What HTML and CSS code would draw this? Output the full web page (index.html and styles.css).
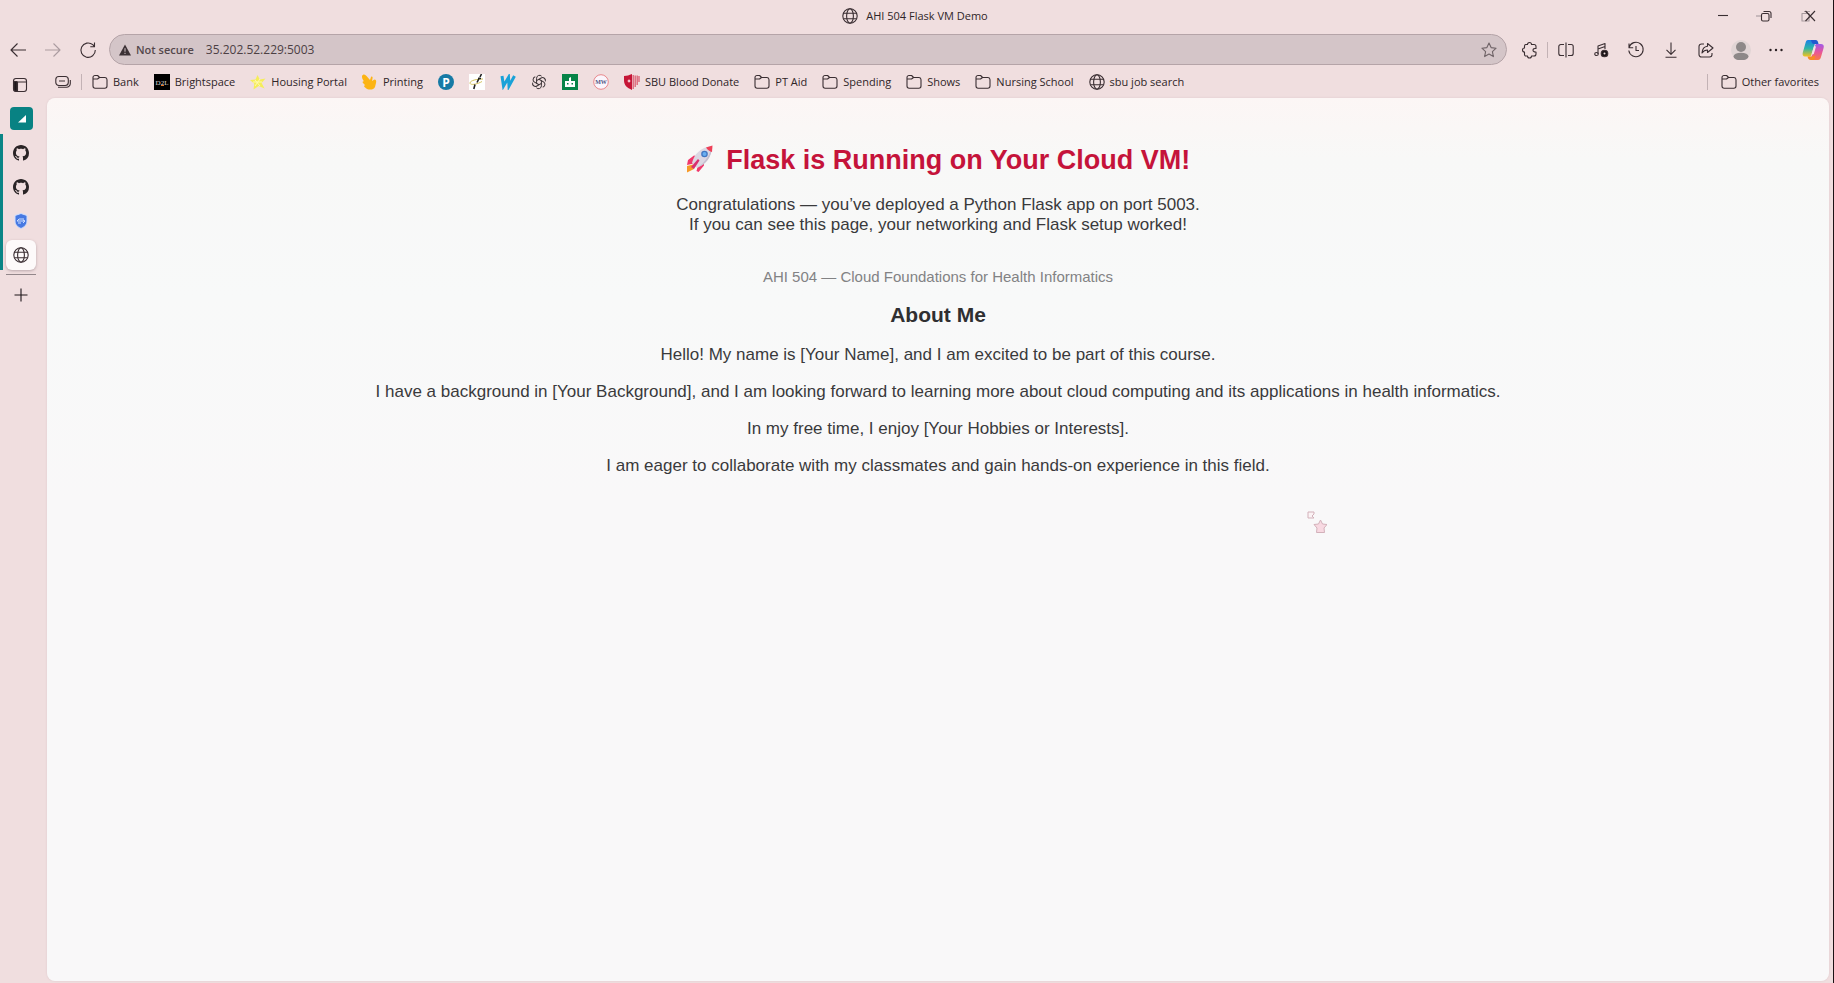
FILE: index.html
```html
<!DOCTYPE html>
<html lang="en">
<head>
<meta charset="utf-8">
<title>AHI 504 Flask VM Demo</title>
<link rel="stylesheet" href="styles.css">
</head>
<body>
<svg class="defs" aria-hidden="true">
  <symbol id="folder" viewBox="0 0 16 16"><path d="M1 4V3.500a2 2 0 0 1 2-2h2.600l2 2H13A2.200 2.200 0 0 1 15 5.700V12a2.200 2.200 0 0 1-2.200 2.200H3.200A2.200 2.200 0 0 1 1 12ZM1 5h4.500l2-1.500"/></symbol>
  <symbol id="globe" viewBox="0 0 16 16"><circle cx="8" cy="8" r="7.200"/><ellipse cx="8" cy="8" rx="3.400" ry="7.200"/><path d="M1.500 5.300h13M1.500 10.700h13"/></symbol>
  <symbol id="github" viewBox="0 0 16 16"><path d="M8 0C3.580 0 0 3.580 0 8c0 3.540 2.290 6.530 5.470 7.590.4.070.55-.17.55-.38 0-.19-.01-.82-.01-1.490-2.010.37-2.530-.49-2.690-.94-.09-.23-.48-.94-.82-1.130-.28-.15-.68-.52-.01-.53.63-.01 1.080.58 1.230.82.72 1.210 1.870.87 2.330.66.07-.52.28-.87.51-1.070-1.780-.2-3.640-.89-3.640-3.950 0-.87.31-1.590.82-2.150-.08-.2-.36-1.020.08-2.120 0 0 .67-.21 2.200.82.64-.18 1.320-.27 2-.27s1.360.09 2 .27c1.530-1.040 2.200-.82 2.200-.82.44 1.100.16 1.920.08 2.120.51.56.82 1.270.82 2.150 0 3.070-1.870 3.750-3.650 3.950.29.25.54.73.54 1.480 0 1.070-.01 1.930-.01 2.200 0 .21.15.46.55.38A8 8 0 0 0 16 8c0-4.420-3.580-8-8-8Z"/></symbol>
</svg>

<header class="titlebar">
  <div class="title"><svg class="icon"><use href="#globe"/></svg><span>AHI 504 Flask VM Demo</span></div>
  <div class="window-controls">
    <button class="window-button" aria-label="Minimize"><svg class="icon" viewBox="0 0 16 16"><path d="M3 7.500h10"/></svg></button>
    <button class="window-button" aria-label="Restore"><svg class="icon" viewBox="0 0 16 16"><path class="faint" d="M-2 8h6"/><rect x="3.500" y="5.500" width="7.500" height="7.500" rx="1.500"/><path d="M5.500 3.500h5.500a2 2 0 0 1 2 2V10"/></svg></button>
    <button class="window-button" aria-label="Close"><svg class="icon" viewBox="0 0 16 16"><path class="faint" d="M1 5.500h7V13H1ZM3 3.500h6"/><path d="m4.500 3 9.500 10M14 3 4.500 13"/></svg></button>
  </div>
</header>

<nav class="toolbar" aria-label="Navigation">
  <button class="tool" aria-label="Back"><svg class="icon" viewBox="0 0 16 16"><path d="M7.500 1.500 1 8l6.500 6.500M1 8h15"/></svg></button>
  <button class="tool tool-off" aria-label="Forward"><svg class="icon" viewBox="0 0 16 16"><path d="M8.500 1.500 15 8l-6.500 6.500M15 8H0"/></svg></button>
  <button class="tool" aria-label="Refresh"><svg class="icon" viewBox="0 0 16 16"><path d="M15.300 8A7.200 7.200 0 1 1 12.800 2.700L14.500 4.500M14.500.500v4.200h-4.200"/></svg></button>
  <div class="address">
    <button class="security"><svg class="warning" viewBox="0 0 12 12"><path d="M6 .500 12 11.500H0Z"/><path class="mark" d="M6 4.200v3.500M6 8.800v1.200"/></svg>Not secure</button>
    <input class="url" type="text" aria-label="Address" value="35.202.52.229:5003">
    <button class="favorite" aria-label="Add to favorites"><svg class="icon" viewBox="0 0 16 16"><path d="m8 1 2.100 4.600 5 .6-3.700 3.400 1 5L8 12.100l-4.400 2.500 1-5L.900 6.200l5-.6Z"/></svg></button>
  </div>
  <button class="tool" aria-label="Extensions"><svg class="icon" viewBox="0 0 16 16"><path d="M5.500 2.500a2 2 0 0 1 4 0h2.500a2 2 0 0 1 2 2v2c-4-.7-4 4 0 3.500v2a2 2 0 0 1-2 2H9.500a2 2 0 0 1-4 0H4A1.500 1.500 0 0 1 2.500 12.500V10a2 2 0 0 1 0-4V4A1.500 1.500 0 0 1 4 2.500Z"/></svg></button>
  <span class="divider"></span>
  <button class="tool" aria-label="Split screen"><svg class="icon" viewBox="0 0 16 16"><path d="M8 .500v15M6 2.500H2.800a2 2 0 0 0-2 2v7a2 2 0 0 0 2 2H6M10 2.500h3.200a2 2 0 0 1 2 2v7a2 2 0 0 1-2 2H10"/></svg></button>
  <button class="tool" aria-label="Media control"><svg class="icon" viewBox="0 0 16 16"><path d="M5 12V4l7-2.500V7M5 7l7-2.500"/><ellipse cx="3.500" cy="12" rx="1.800" ry="1.500"/><circle class="solid" cx="11.500" cy="11.500" r="3.300"/><circle class="dot" cx="11.500" cy="11.500" r="1"/></svg></button>
  <button class="tool" aria-label="History"><svg class="icon" viewBox="0 0 16 16"><path d="M1 5.500A7.200 7.200 0 1 1 .800 8.500M1 1.500v4.200h4.200M8 4v4.500h3"/></svg></button>
  <button class="tool" aria-label="Downloads"><svg class="icon" viewBox="0 0 16 16"><path d="M8 .500v11.500M3.500 7.800 8 12.300l4.500-4.500M2.500 15.300h11"/></svg></button>
  <button class="tool" aria-label="Share"><svg class="icon" viewBox="0 0 16 16"><path d="M6 2H3.500A2.500 2.500 0 0 0 1 4.500v8A2.500 2.500 0 0 0 3.500 15h8a2.500 2.500 0 0 0 2.500-2.500V11M9.500 1.500 15 6l-5.500 4.500V8C7 8 5.500 8.800 4 11c.3-4 2.500-6.500 5.500-6.800Z"/></svg></button>
  <button class="tool" aria-label="Profile"><svg class="avatar" viewBox="0 0 20 20"><circle class="avatar-back" cx="10" cy="10" r="10"/><circle cx="10" cy="7" r="5"/><ellipse cx="10" cy="16.500" rx="7.500" ry="3.800"/></svg></button>
  <button class="tool" aria-label="Settings and more"><svg class="icon dots" viewBox="0 0 16 16"><circle cx="2.500" cy="8" r="1.200"/><circle cx="8" cy="8" r="1.200"/><circle cx="13.500" cy="8" r="1.200"/></svg></button>
  <button class="tool copilot" aria-label="Copilot"><svg class="copilot-icon" viewBox="0 0 22 22">
    <defs><linearGradient id="cool" x1="0" y1="0" x2="0" y2="1"><stop offset="0" stop-color="#1b7fe8"/><stop offset=".5" stop-color="#2db5a8"/><stop offset="1" stop-color="#f5c21b"/></linearGradient><linearGradient id="warm" x1="0" y1="0" x2="0" y2="1"><stop offset="0" stop-color="#a05be8"/><stop offset=".5" stop-color="#e7559c"/><stop offset="1" stop-color="#fb7a45"/></linearGradient></defs>
    <path fill="url(#cool)" d="M6 1h8L9.500 15.500C9 17 8.500 17.500 7 17.500H3C.8 17.500.200 15.800.800 13.500L3.500 4C4 2 4.500 1 6 1Z"/>
    <path fill="#2259ce" d="M9 1h4.500c2 0 2.500 1.500 3 4H12C10 5 9.600 3 9 1Z"/>
    <path fill="url(#warm)" d="M14.500 5H19c2.400 0 3.200 1.600 2.600 4L19 18c-.6 2-1.300 3-3 3H8.500L13 7c.4-1.400.7-2 1.500-2Z"/>
    <path fill="#f68a24" d="M5.500 17.500h4.700l3.300-1L12 21h-3c-2.500 0-2.800-1.500-3.500-3.500Z"/>
    <path fill="#f3e2e6" d="m12 7-2.500 8.500H10l1.800-.5L14 7.500Z"/></svg></button>
</nav>

<div class="workspace">
  <aside class="sidebar">
    <button class="side-button" aria-label="Tab actions"><svg class="icon" viewBox="0 0 16 16"><rect x="1.500" y="1.500" width="13" height="13" rx="2.500"/><path d="M2 5h12.500M5.500 5v9"/><path class="solid" d="M2 4.500h3v9.500H3L2 13Z"/></svg></button>
    <button class="group" aria-label="Tab group"><svg class="group-icon" viewBox="0 0 8 8"><path d="M8 0v7.500H0Z"/></svg></button>
    <div class="tabs">
      <button class="tab" aria-label="GitHub"><svg class="mark-icon"><use href="#github"/></svg></button>
      <button class="tab" aria-label="GitHub"><svg class="mark-icon"><use href="#github"/></svg></button>
      <button class="tab" aria-label="Cloud security"><svg class="shield" viewBox="0 0 14 16"><path fill="#4779e2" d="m7 .500 6 2V8c0 3.500-2.500 6-6 7.500C3.500 14 1 11.500 1 8V2.500Z"/><path d="M3 8h8M5 6h5M4 10h3M9 7l2 1-2 2M5 6 3 8"/></svg></button>
      <button class="tab tab-current" aria-label="AHI 504 Flask VM Demo"><svg class="icon"><use href="#globe"/></svg></button>
    </div>
    <button class="new-tab" aria-label="New tab"><svg class="icon" viewBox="0 0 16 16"><path d="M8 1.500v13M1.500 8h13"/></svg></button>
  </aside>

  <div class="main">
    <nav class="bookmarks" aria-label="Favorites">
      <button class="bookmark" aria-label="Saved tabs"><svg class="icon" viewBox="0 0 16 16"><rect x=".8" y="2.500" width="12.500" height="9" rx="3"/><path d="M4 7h6M3 13.300h8.500A3.800 3.800 0 0 0 15.300 9.500V6"/></svg></button>
      <span class="divider"></span>
      <a class="bookmark" href="#"><svg class="icon"><use href="#folder"/></svg>Bank</a>
      <a class="bookmark" href="#"><svg class="picture" viewBox="0 0 16 16"><path d="M0 0h16v16H0Z"/><text x="8" y="11" class="d2l">D2L</text><path fill="#e87424" d="M7 11h3v1H7Z"/></svg>Brightspace</a>
      <a class="bookmark" href="#"><svg class="picture" viewBox="0 0 16 16"><path fill="#f5ed5a" d="m7.500 1 2.300 4.400 5.700-.9-3.900 4.400 3 5.600-6-2.500-5.100 3.600.8-5.800L0 6l5.500-.5Z"/><path fill="none" stroke="#fff9b0" d="m5 6 5 6M10 5l-5 7M3 8h9"/></svg>Housing Portal</a>
      <a class="bookmark" href="#"><svg class="picture" viewBox="0 0 16 16"><path fill="#fcb414" d="M0 2C1 0 3 0 4.500 2L8 6 9 3C10 2 11 3 10.500 4.500L10 7 12.500 5.500C14 5.500 14.500 7 14 9L13 13C11.500 16 8 16 5 15L2.500 13C1.500 12 2.500 11 3.500 11.500L1 9C0 8 1 7 2 7.500L.5 5C0 3.500 0 3 0 2Z"/></svg>Printing</a>
      <a class="bookmark" href="#" aria-label="Pearson"><svg class="picture" viewBox="0 0 16 16"><circle cx="8" cy="8" r="8" fill="#167aa5"/><text x="8" y="12.500" class="pearson">P</text></svg></a>
      <a class="bookmark" href="#" aria-label="Dance"><svg class="picture" viewBox="0 0 16 16"><path fill="#fff" d="M0 0h16v16H0Z"/><path fill="none" stroke="#d3c05a" d="M14 5C8 5 1 6.500 1 9s7 1.500 12-1.500"/><path fill="none" stroke="#222" stroke-width="1.600" d="m12.500 0-1.500 3M10.500 3.500 8 8.500M6 10.500 4.800 15M9 4.500h3"/></svg></a>
      <a class="bookmark" href="#" aria-label="W"><svg class="picture" viewBox="0 0 16 16"><path fill="none" stroke="#19a2d8" stroke-width="3" d="M2 2l1.500 10L8.500 3.500l.5 8.500L14.500 2"/></svg></a>
      <a class="bookmark" href="#" aria-label="ChatGPT"><svg class="picture knot" viewBox="0 0 16 16"><g id="petal"><path d="M5.600 9.400V4.200A2.900 2.900 0 0 1 10.600 2.200"/></g><use href="#petal" transform="rotate(60 8 8)"/><use href="#petal" transform="rotate(120 8 8)"/><use href="#petal" transform="rotate(180 8 8)"/><use href="#petal" transform="rotate(240 8 8)"/><use href="#petal" transform="rotate(300 8 8)"/></svg></a>
      <a class="bookmark" href="#" aria-label="Robot"><svg class="picture" viewBox="0 0 16 16"><path fill="#078448" d="M0 0h16v16H0Z"/><path fill="#fff" d="M3 7h4V4L9 3v4h4v6H3Z"/><path fill="#078448" d="M5 9h1.500v1.500H5ZM9.500 9H11v1.500H9.500Z"/></svg></a>
      <a class="bookmark" href="#" aria-label="MW"><svg class="picture" viewBox="0 0 16 16"><circle cx="8" cy="8" r="7.300" fill="#faf5fc" stroke="#e9878b"/><text x="8" y="10" class="mw">MW</text></svg></a>
      <a class="bookmark" href="#"><svg class="picture" viewBox="0 0 16 16"><path fill="#c51637" d="M0 2c3 0 5-1 8-2v16C3 13.500 0 11.500 0 6Z"/><path fill="#fff" d="m5 5 .7 1.500L7 7l-1.300.6L5 9l-.6-1.400L3 7l1.400-.5Z"/><path fill="none" stroke="#dd6678" stroke-width="1.400" d="M9.200 1v14M11.200 1.500v11.500M13.200 1.500V11M15 2v6"/></svg>SBU Blood Donate</a>
      <a class="bookmark" href="#"><svg class="icon"><use href="#folder"/></svg>PT Aid</a>
      <a class="bookmark" href="#"><svg class="icon"><use href="#folder"/></svg>Spending</a>
      <a class="bookmark" href="#"><svg class="icon"><use href="#folder"/></svg>Shows</a>
      <a class="bookmark" href="#"><svg class="icon"><use href="#folder"/></svg>Nursing School</a>
      <a class="bookmark" href="#"><svg class="icon"><use href="#globe"/></svg>sbu job search</a>
      <span class="divider divider-end"></span>
      <a class="bookmark" href="#"><svg class="icon"><use href="#folder"/></svg>Other favorites</a>
    </nav>

    <main class="page">
      <h1><svg class="rocket" viewBox="0 0 28 28" aria-hidden="true"><path fill="#f79a28" d="M1 21 7 19.500 8 24 1 27.500Z"/><path fill="#f0386b" d="m2 15 6-4.500 4 1-4 7-7 1.500ZM12 20l6-5v5.500L12.500 27 10.500 26Z"/><path fill="#dcd7e3" d="M6 18C8 10 14 2 26 1c0 11-6 18-15 22Z"/><path fill="#c5bfce" d="M11 23C20 17 24 9 26 1c0 11-6 18-15 22Z"/><path fill="#ef4058" d="M20 2.500 26.500.500 26 7C24 6.500 21.500 5 20 2.500Z"/><circle cx="18.500" cy="9" r="3.300" fill="#4176c2"/><circle cx="18.500" cy="9" r="2" fill="#69aef0"/><path fill="#d92e6f" d="m12 14 1.500 1.500L8 24l-3-2Z"/></svg> Flask is Running on Your Cloud VM!</h1>
      <p>Congratulations — you’ve deployed a Python Flask app on port 5003.<br>If you can see this page, your networking and Flask setup worked!</p>
      <p class="course">AHI 504 — Cloud Foundations for Health Informatics</p>
      <h2>About Me</h2>
      <p>Hello! My name is [Your Name], and I am excited to be part of this course.</p>
      <p>I have a background in [Your Background], and I am looking forward to learning more about cloud computing and its applications in health informatics.</p>
      <p>In my free time, I enjoy [Your Hobbies or Interests].</p>
      <p>I am eager to collaborate with my classmates and gain hands-on experience in this field.</p>
      <svg class="pointer" viewBox="0 0 20 22" aria-hidden="true"><path d="M1 1h6v2L5 5l2 2H1Z"/><path class="pointer-star" d="m13.500 9 2 4 4.500.5-3 3.500.5 4.500h-8l.5-4.500-3-3.500 4.500-.5Z"/></svg>
    </main>
  </div>
</div>
</body>
</html>
```

FILE: styles.css
```css
* { box-sizing: border-box; }

body {
  margin: 0;
  min-height: 100vh;
  display: flex;
  flex-direction: column;
  background: #f0dedf;
  border-right: 1px solid #1c1215;
  color: #2f2528;
  font: 11px/16px "Open Sans", "Noto Sans", sans-serif;
}

button {
  padding: 0;
  border: 0;
  background: none;
  color: inherit;
  font: inherit;
}

button, .bookmark { display: flex; align-items: center; justify-content: center; }

.defs { position: absolute; width: 0; height: 0; }

.icon {
  flex: none;
  width: 16px;
  height: 16px;
  overflow: visible;
  fill: none;
  stroke: #3a2e32;
  stroke-width: 1.1;
  stroke-linejoin: round;
}
.icon .solid { fill: #1c1518; }
.icon .dot { fill: #f0dedf; stroke: none; }
.icon .faint { stroke: #a79a9d; }

.titlebar {
  display: grid;
  grid-template-columns: 1fr auto 1fr;
  align-items: center;
  height: 34px;
  padding: 0 3px 3px 0;
}
.title { grid-column: 2; display: flex; align-items: center; gap: 8px; }
.window-controls { display: flex; justify-content: flex-end; }
.window-button { width: 43px; height: 30px; }

.toolbar { display: flex; align-items: center; height: 31px; }
.tool { flex: none; width: 35px; height: 30px; }
.tool-off .icon { stroke: #ab9ca0; }
.divider { flex: none; width: 1px; height: 16px; background: #c3b2b5; }
.avatar { width: 20px; height: 20px; fill: #8d8888; }
.avatar .avatar-back { fill: #e1d5d5; }
.icon.dots { fill: #2a2023; stroke: none; }
.copilot { width: 40px; }
.copilot-icon { width: 22px; height: 22px; }

.address {
  flex: 1;
  display: flex;
  align-items: center;
  height: 31px;
  margin: 0 5px 0 4px;
  padding: 0 9px;
  border: 1px solid #b5a4a8;
  border-radius: 16px;
  background: #d4c5c8;
}
.security { gap: 5px; color: #54484c; font-weight: 600; }
.warning { width: 12px; height: 12px; fill: #3d3236; }
.warning .mark { stroke: #d4c5c8; }
.url {
  flex: 1;
  margin: 0 0 0 12px;
  padding: 0;
  border: 0;
  outline: 0;
  background: none;
  color: #4c4044;
  font: 12px/16px "Open Sans", "Noto Sans", sans-serif;
}
.favorite .icon { stroke: #6f6367; }

.workspace { flex: 1; display: flex; }

.sidebar {
  flex: none;
  width: 47px;
  display: flex;
  flex-direction: column;
  align-items: flex-start;
}
.side-button { width: 40px; height: 40px; }
.group {
  width: 23px;
  height: 23px;
  margin: 2px 0 4px 10px;
  border-radius: 4px;
  background: #088283;
}
.group-icon { width: 8px; height: 8px; fill: #fff; }
.tabs {
  display: flex;
  flex-direction: column;
  align-items: center;
  gap: 4px;
  width: 36px;
  padding: 4px 0 0 3px;
  border-left: 3px solid #0a8586;
}
.tab { width: 30px; height: 30px; border-radius: 6px; }
.tab-current { background: #fdfafa; box-shadow: 0 1px 3px #b9a7aa; }
.mark-icon { width: 16px; height: 16px; fill: #2a2426; }
.shield { width: 14px; height: 16px; fill: none; stroke: #cfe0ff; }
.new-tab {
  width: 30px;
  height: 40px;
  margin: 4px 0 0 6px;
  border-top: 1px solid #92868a;
}
.new-tab .icon { stroke: #1c1518; }

.main { flex: 1; min-width: 0; display: flex; flex-direction: column; padding: 0 4px 2px 0; }

.bookmarks {
  display: flex;
  align-items: center;
  gap: 15px;
  height: 33px;
  padding: 1px 10px 0 8px;
}
.bookmark { flex: none; gap: 5px; color: inherit; text-decoration: none; }
.bookmarks .divider { margin: 0 -5px; }
.bookmarks .divider-end { margin: 0 -2px 0 auto; }
.picture { width: 16px; height: 16px; }
.d2l { fill: #ded9d5; font: 7px "Liberation Serif", serif; text-anchor: middle; }
.pearson { fill: #fff; font: bold 12px "Open Sans", sans-serif; text-anchor: middle; }
.mw { fill: #4f5683; font: bold 6px "Liberation Serif", serif; text-anchor: middle; }
.knot { fill: none; stroke: #3a3235; stroke-width: 1; }

.page {
  position: relative;
  flex: 1;
  padding: 44px 40px;
  border-radius: 8px;
  background: linear-gradient(#fcf6f5, #f8f8f7 60px, #f8f9f9 200px, #f9f8f9 400px);
  box-shadow: 0 0 2px #d9c5c9;
  color: #3a3a3c;
  font: 17px/20px "Liberation Sans", Arial, sans-serif;
  text-align: center;
}
.page p { margin: 0 0 17px; }
.page h1 { margin: 0 0 16px; color: #c5133a; font-size: 27px; line-height: 37px; }
.page h2 { margin: 0 0 18px; color: #2f2f31; font-size: 21px; line-height: 24px; }
.page .course { margin: 32px 0 16px; color: #828284; font-size: 15px; }
.rocket { width: 28px; height: 28px; margin-right: 5px; vertical-align: -4px; }
.pointer {
  position: absolute;
  left: 1260px;
  top: 413px;
  width: 20px;
  height: 22px;
  fill: #fbf3f5;
  stroke: #d3b1ba;
}
.pointer .pointer-star { fill: #f8d9e2; }
```
